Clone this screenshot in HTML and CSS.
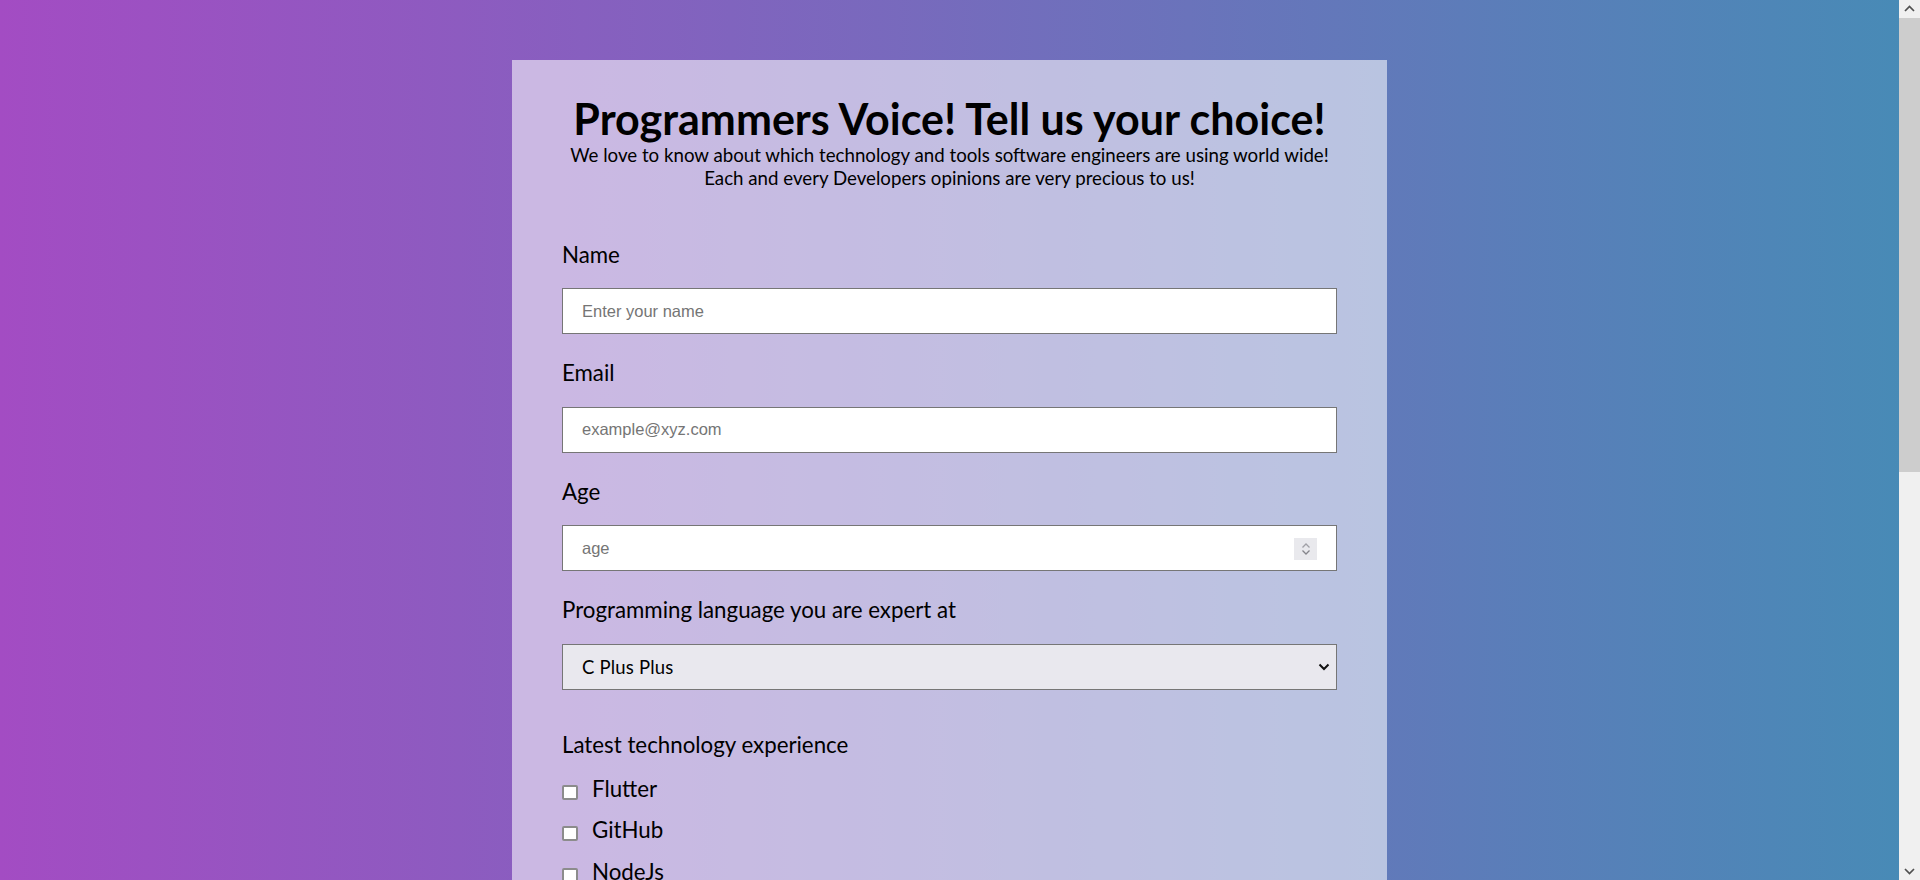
FILE: index.html
```html
<!DOCTYPE html>
<html lang="en">
<head>
<meta charset="utf-8">
<title>Programmers Voice Survey</title>
<link rel="stylesheet" href="styles.css">
</head>
<body>
<main class="card">
  <header class="intro">
    <h1 class="title">Programmers Voice! Tell us your choice!</h1>
    <p class="lead">
      <span class="lead-line">We love to know about which technology and tools software engineers are using world wide!</span>
      <span class="lead-line">Each and every Developers opinions are very precious to us!</span>
    </p>
  </header>
  <form class="survey">
    <div class="field">
      <label class="field-label" for="name">Name</label>
      <input class="text-input" id="name" type="text" placeholder="Enter your name">
    </div>
    <div class="field">
      <label class="field-label" for="email">Email</label>
      <input class="text-input" id="email" type="email" placeholder="example@xyz.com">
    </div>
    <div class="field">
      <label class="field-label" for="age">Age</label>
      <div class="number-wrap">
        <input class="text-input number-input" id="age" type="number" placeholder="age">
        <span class="spinner" aria-hidden="true">
          <svg width="12" height="16" viewBox="0 0 12 16"><path d="M2.5 6.5 L6 3 L9.5 6.5" fill="none" stroke="#a0a0a6" stroke-width="1.3"/><path d="M2.5 9.5 L6 13 L9.5 9.5" fill="none" stroke="#85858b" stroke-width="1.3"/></svg>
        </span>
      </div>
    </div>
    <div class="field">
      <label class="field-label" for="lang">Programming language you are expert at</label>
      <div class="select-wrap">
        <select class="select-input" id="lang">
          <option>C Plus Plus</option>
          <option>Java</option>
          <option>Python</option>
          <option>JavaScript</option>
        </select>
        <span class="chevron" aria-hidden="true">
          <svg width="12" height="8" viewBox="0 0 12 8"><path d="M1.5 1.5 L6 6 L10.5 1.5" fill="none" stroke="#111" stroke-width="2"/></svg>
        </span>
      </div>
    </div>
    <div class="field group">
      <p class="field-label group-label">Latest technology experience</p>
      <label class="option"><input class="check" type="checkbox"> Flutter</label>
      <label class="option"><input class="check" type="checkbox"> GitHub</label>
      <label class="option"><input class="check" type="checkbox"> NodeJs</label>
      <label class="option"><input class="check" type="checkbox"> React</label>
      <label class="option"><input class="check" type="checkbox"> Docker</label>
    </div>
    <div class="field group">
      <p class="field-label group-label">Would you recommend this survey to a friend?</p>
      <label class="option"><input class="check radio" type="radio" name="recommend"> Definitely</label>
      <label class="option"><input class="check radio" type="radio" name="recommend"> Maybe</label>
      <label class="option"><input class="check radio" type="radio" name="recommend"> Not sure</label>
    </div>
    <div class="field">
      <label class="field-label" for="comments">Any comments or suggestions?</label>
      <textarea class="text-area" id="comments" placeholder="Enter your comment here..."></textarea>
    </div>
    <div class="actions">
      <button class="submit" type="submit">Submit</button>
    </div>
  </form>
</main>
<div class="scrollbar" aria-hidden="true">
  <span class="sb-btn">
    <svg width="11" height="7" viewBox="0 0 11 7"><path d="M1 6 L5.5 1.5 L10 6" fill="none" stroke="#505050" stroke-width="1.7"/></svg>
  </span>
  <span class="sb-track"><span class="sb-thumb"></span></span>
  <span class="sb-btn">
    <svg width="11" height="7" viewBox="0 0 11 7"><path d="M1 1 L5.5 5.5 L10 1" fill="none" stroke="#505050" stroke-width="1.7"/></svg>
  </span>
</div>
</body>
</html>
```
FILE: styles.css
```css
html {
  background: linear-gradient(to right, #a34cc3, #478bb6);
  min-height: 100%;
}
body {
  margin: 0 21px 0 0;
  font-family: Lato, "Noto Sans", sans-serif;
  color: #000;
}
.card {
  width: 46.08%;
  margin: 60px auto 60px;
  padding: 35px 50px 150px;
  box-sizing: border-box;
  background: rgba(255, 255, 255, 0.56);
}
.intro {
  text-align: center;
  margin-bottom: 49px;
}
.title {
  margin: 0;
  font-size: 43px;
  line-height: 48px;
  font-weight: 700;
}
.lead {
  margin: 1px 0 0;
  font-size: 18.7px;
  line-height: 23.3px;
}
.lead-line {
  display: block;
}
.survey {
  display: flex;
  flex-direction: column;
}
.field {
  display: flex;
  flex-direction: column;
  margin-bottom: 24px;
}
.field-label {
  display: block;
  margin: 0 0 18.6px;
  font-size: 22.3px;
  line-height: 30px;
}
.text-input,
.select-input {
  width: 100%;
  height: 46px;
  box-sizing: border-box;
  border: 1px solid #767676;
  border-radius: 0;
  padding: 0 19px;
  margin: 0;
  background: #fff;
  font-family: "Liberation Sans", Arial, sans-serif;
  font-size: 16.5px;
  color: #000;
  outline: none;
}
.text-input::placeholder {
  color: #757575;
}
.number-wrap,
.select-wrap {
  position: relative;
}
.number-input {
  -moz-appearance: textfield;
}
.number-input::-webkit-inner-spin-button,
.number-input::-webkit-outer-spin-button {
  -webkit-appearance: none;
  margin: 0;
}
.spinner {
  position: absolute;
  right: 20px;
  top: 13px;
  width: 23px;
  height: 22px;
  background: #e9e9ed;
  display: flex;
  align-items: center;
  justify-content: center;
}
.select-input {
  -webkit-appearance: none;
  appearance: none;
  background: #e9e8ee;
  font-family: Lato, "Noto Sans", sans-serif;
  font-size: 18.5px;
  letter-spacing: 0.2px;
}
.chevron {
  position: absolute;
  right: 7px;
  top: 19px;
  display: flex;
}
.group {
  margin-top: 15.6px;
}
.group-label {
  margin-bottom: 8.1px;
}
.option {
  display: flex;
  align-items: center;
  height: 41.7px;
  line-height: 41.7px;
  font-size: 22.3px;
}
.check {
  -webkit-appearance: none;
  appearance: none;
  width: 16px;
  height: 15px;
  margin: 7px 14px 0 0;
  flex: none;
  box-sizing: border-box;
  border: 2px solid #8c8c8c;
  border-radius: 2px;
  background: #fff;
}
.check:checked {
  background: #0075ff;
  border-color: #0075ff;
}
.radio {
  border-radius: 50%;
}
.text-area {
  height: 150px;
  box-sizing: border-box;
  border: 1px solid #767676;
  padding: 14px 19px;
  font-family: "Liberation Sans", Arial, sans-serif;
  font-size: 16.5px;
  resize: vertical;
}
.actions {
  display: flex;
}
.submit {
  width: 100%;
  height: 50px;
  border: 0;
  background: #6a5acd;
  color: #fff;
  font-family: Lato, "Noto Sans", sans-serif;
  font-size: 22px;
}
.scrollbar {
  position: fixed;
  top: 0;
  right: 0;
  bottom: 0;
  width: 21px;
  display: flex;
  flex-direction: column;
  background: #f0f0f0;
}
.sb-btn {
  height: 17px;
  flex: none;
  display: flex;
  align-items: center;
  justify-content: center;
}
.sb-track {
  flex: 1;
  display: flex;
  flex-direction: column;
}
.sb-thumb {
  margin-top: 1px;
  height: 454px;
  background: #cdcdcd;
}
```
